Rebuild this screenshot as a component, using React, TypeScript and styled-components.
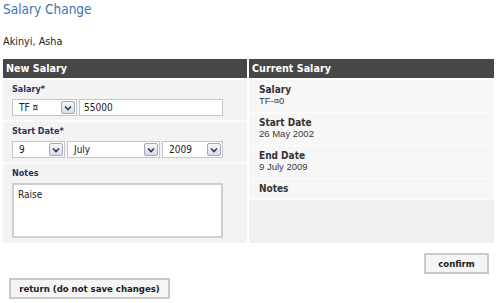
import React from "react"
import styled, { createGlobalStyle } from "styled-components"

const tahoma = `"DejaVu Sans Condensed", "DejaVu Sans", Verdana, sans-serif`

const GlobalStyle = createGlobalStyle`
    html, body {
        margin: 0;
        padding: 0;
        background: #ffffff;
        font-family: ${tahoma};
        font-stretch: condensed;
        color: #222;
    }
`

const Page = styled.div`
    width: 500px;
    height: 303px;
    padding: 0 3px;
    box-sizing: border-box;
    overflow: hidden;
`

const Title = styled.h1`
    margin: 0;
    font-weight: normal;
    font-size: 13.5px;
    line-height: 18px;
    color: #3d73b3;
`

const Person = styled.div`
    margin-top: 17px;
    font-family: "DejaVu Sans", Verdana, sans-serif;
    font-stretch: normal;
    font-size: 9.7px;
    line-height: 14px;
    color: #222;
`

const Columns = styled.div`
    display: grid;
    grid-template-columns: 244px 245px;
    gap: 2px;
    margin-top: 10px;
`

const Panel = styled.div`
    display: flex;
    flex-direction: column;
    background: #f0f0f0;
    height: 184px;
    overflow: hidden;
`

const PanelHeader = styled.div`
    background: #474747;
    color: #fff;
    font-weight: bold;
    font-size: 10.7px;
    line-height: 19px;
    height: 19px;
    padding-left: 3px;
    border-bottom: 2px solid #fff;
    flex-shrink: 0;
`

const FormRow = styled.div<{ grow?: boolean }>`
    padding: 3px 9px 4px 9px;
    background: #f3f3f3;
    border-bottom: 2px solid #fbfbfb;
    ${props => props.grow ? "flex: 1; border-bottom: none;" : ""}
`

const Label = styled.div`
    font-size: 9px;
    font-weight: bold;
    color: #30305a;
    line-height: 12px;
    margin-bottom: 4px;
`

const Fields = styled.div`
    display: flex;
    gap: 2px;
`

const SelectBox = styled.div<{ w: number }>`
    width: ${props => props.w}px;
    height: 17px;
    box-sizing: border-box;
    border: 1px solid #c6c6c6;
    background: #fff;
    display: flex;
    align-items: center;
    justify-content: space-between;
    padding: 0 1px 0 6px;
    font-size: 10px;
    color: #222;
`

const Arrow = styled.span`
    width: 14px;
    height: 13px;
    box-sizing: border-box;
    border: 1px solid #a3aabb;
    border-radius: 2px;
    background: linear-gradient(#f6f7fa, #d8dce5);
    display: flex;
    align-items: center;
    justify-content: center;
`

const TextInput = styled.div`
    width: 144px;
    height: 17px;
    box-sizing: border-box;
    border: 1px solid #c6c6c6;
    background: #fff;
    font-size: 10px;
    line-height: 15px;
    padding-left: 4px;
`

const TextArea = styled.div`
    width: 211px;
    height: 55px;
    box-sizing: border-box;
    border: 2px solid #cfcfcf;
    background: #fff;
    font-size: 10px;
    line-height: 13px;
    padding: 3px 4px;
`

const InfoRow = styled.div`
    padding: 4px 10px 5px 10px;
    background: #f7f7f7;
    border-bottom: 1px solid #fdfdfd;
`

const InfoLabel = styled.div`
    font-size: 10px;
    font-weight: bold;
    color: #333;
    line-height: 11px;
`

const InfoValue = styled.div`
    font-family: "Liberation Sans", Arial, sans-serif;
    font-stretch: normal;
    font-size: 9.5px;
    color: #3a3a3a;
    line-height: 12px;
`

const Filler = styled.div`
    flex: 1;
    background: #f0f0f0;
`

const ConfirmBar = styled.div`
    display: flex;
    justify-content: flex-end;
    padding-right: 8px;
    margin-top: 10px;
`

const ReturnBar = styled.div`
    padding-left: 6px;
    margin-top: 3px;
`

const Button = styled.button<{ w: number }>`
    width: ${props => props.w}px;
    height: 21px;
    border: 2px solid #c9c9c9;
    background: #f5f5f5;
    font-family: ${tahoma};
    font-stretch: condensed;
    font-weight: bold;
    font-size: 9.5px;
    color: #222;
    padding: 0;
`

const Chevron = () => (
    <svg width="8" height="6" viewBox="0 0 8 6">
        <path d="M1 1.5 L4 4.5 L7 1.5" fill="none" stroke="#2d3b5a" strokeWidth="1.6" />
    </svg>
)

const Select: React.FC<{ w: number; value: string }> = ({ w, value }) => (
    <SelectBox w={w}>
        <span>{value}</span>
        <Arrow><Chevron /></Arrow>
    </SelectBox>
)

const App: React.FC = () => {
    return <Page>
        <GlobalStyle />
        <Title>Salary Change</Title>
        <Person>Akinyi, Asha</Person>
        <Columns>
            <Panel>
                <PanelHeader>New Salary</PanelHeader>
                <FormRow>
                    <Label>Salary*</Label>
                    <Fields>
                        <Select w={65} value="TF ¤" />
                        <TextInput>55000</TextInput>
                    </Fields>
                </FormRow>
                <FormRow>
                    <Label>Start Date*</Label>
                    <Fields>
                        <Select w={53} value="9" />
                        <Select w={93} value="July" />
                        <Select w={61} value="2009" />
                    </Fields>
                </FormRow>
                <FormRow grow>
                    <Label>Notes</Label>
                    <TextArea>Raise</TextArea>
                </FormRow>
            </Panel>
            <Panel>
                <PanelHeader>Current Salary</PanelHeader>
                <InfoRow>
                    <InfoLabel>Salary</InfoLabel>
                    <InfoValue>TF-¤0</InfoValue>
                </InfoRow>
                <InfoRow>
                    <InfoLabel>Start Date</InfoLabel>
                    <InfoValue>26 May 2002</InfoValue>
                </InfoRow>
                <InfoRow>
                    <InfoLabel>End Date</InfoLabel>
                    <InfoValue>9 July 2009</InfoValue>
                </InfoRow>
                <InfoRow>
                    <InfoLabel>Notes</InfoLabel>
                </InfoRow>
                <Filler />
            </Panel>
        </Columns>
        <ConfirmBar>
            <Button w={65}>confirm</Button>
        </ConfirmBar>
        <ReturnBar>
            <Button w={161}>return (do not save changes)</Button>
        </ReturnBar>
    </Page>
}

export default App
